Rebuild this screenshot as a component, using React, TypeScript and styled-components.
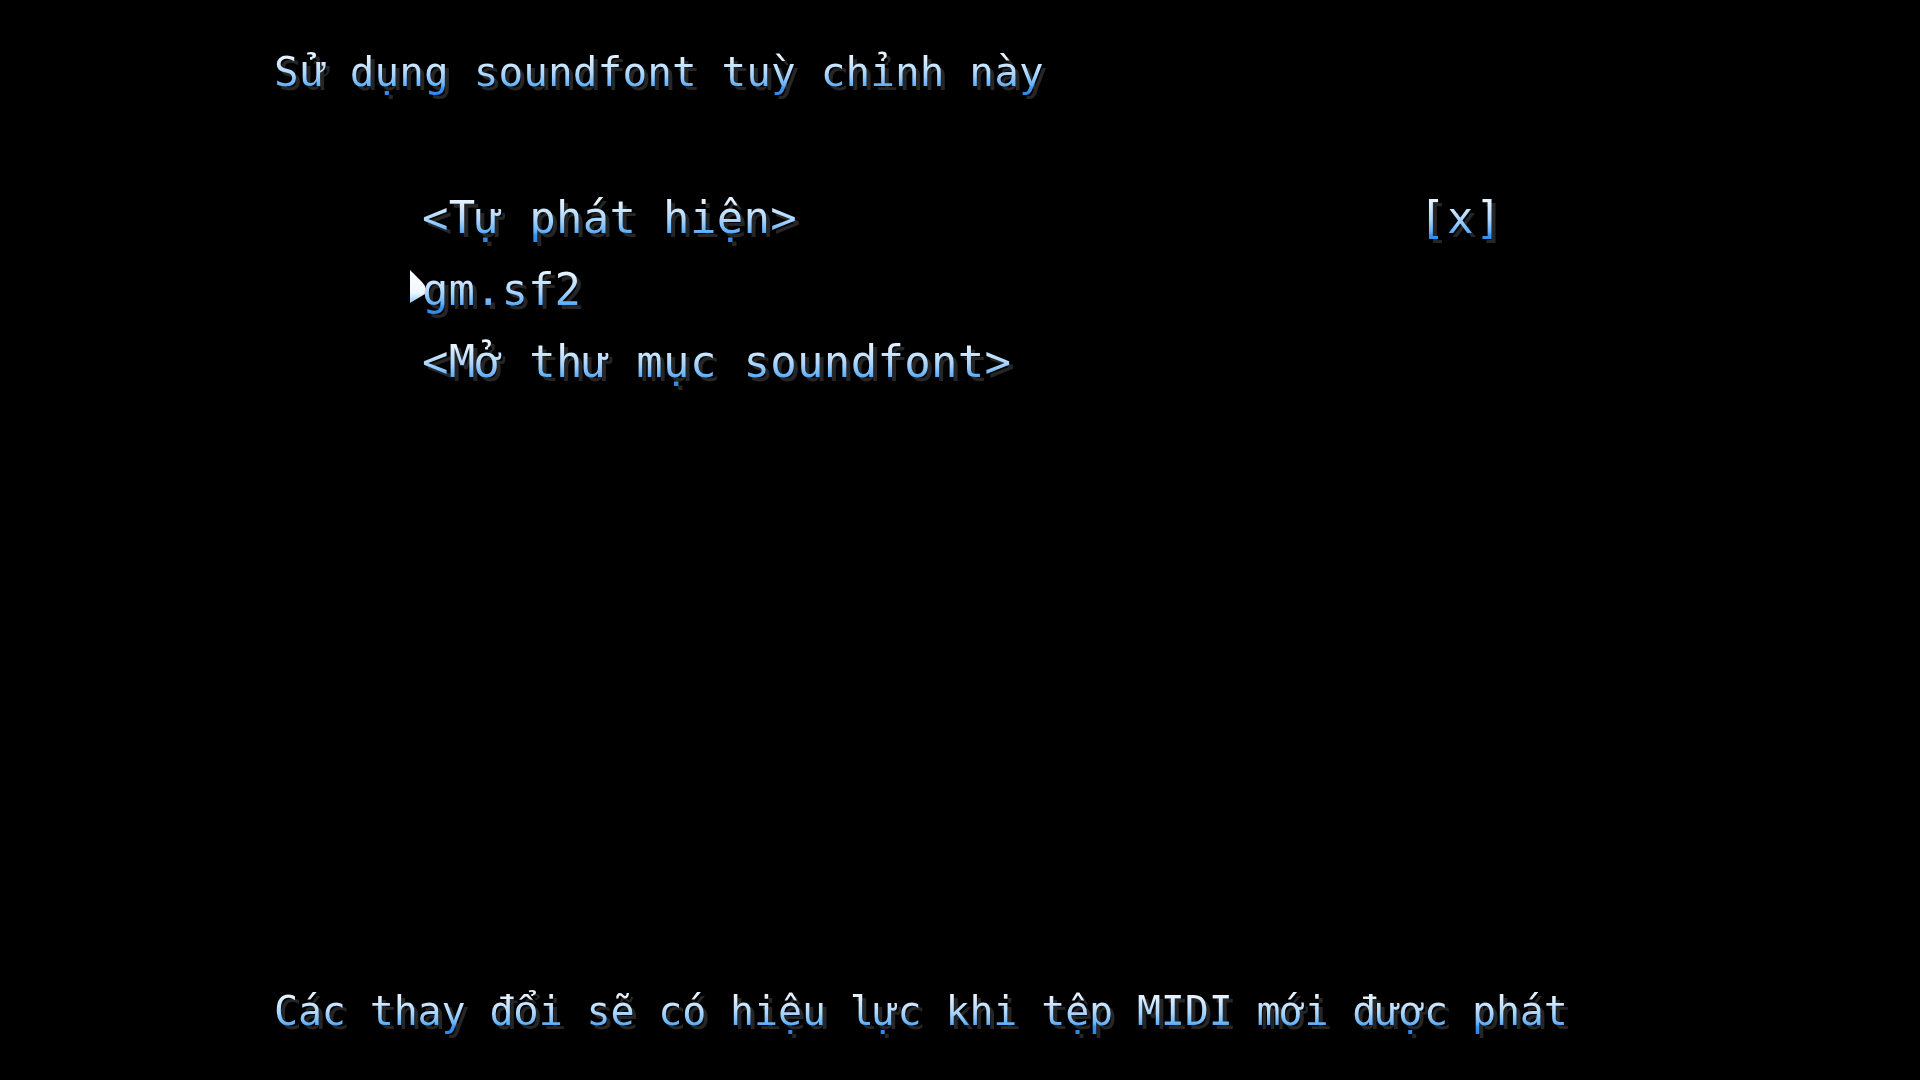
import styled, { createGlobalStyle } from "styled-components";

const Global = createGlobalStyle`
  html, body {
    margin: 0;
    padding: 0;
    background: #000;
  }
`;

const Screen = styled.div`
  box-sizing: border-box;
  width: 100%;
  height: 100vh;
  padding: 48px 0 45px 274px;
  display: flex;
  flex-direction: column;
  background: #000;
  font-family: "DejaVu Sans Mono", "Liberation Mono", monospace;
  font-size: 40px;
  line-height: 48px;
  overflow: hidden;
`;

const Txt = styled.span<{ $size?: number; $spacing?: number }>`
  font-size: ${(p) => p.$size ?? 40}px;
  letter-spacing: ${(p) => p.$spacing ?? 0}px;
  background: linear-gradient(
    180deg,
    #f2f9ff 0%,
    #e2f1ff 20%,
    #a9d5ff 55%,
    #62b0f8 78%,
    #3a95f0 84%,
    #2a86ea 100%
  );
  -webkit-background-clip: text;
  background-clip: text;
  color: transparent;
  -webkit-text-fill-color: transparent;
  filter: drop-shadow(4px 4px 0 #262626);
  white-space: pre;
`;

// DejaVu Sans Mono splits a few stacked Vietnamese marks, so those letters come from Liberation Mono
const Vn = styled.span`
  font-family: "Liberation Mono", "DejaVu Sans Mono", monospace;
  font-size: 1.06em;
  line-height: 0;
`;

const List = styled.div`
  margin-top: 86px;
  padding-left: 148px;
  display: flex;
  flex-direction: column;
  font-size: 44px;
`;

const Row = styled.div`
  position: relative;
  display: grid;
  grid-template-columns: 997px auto;
  line-height: 72px;
`;

const Pointer = styled.svg`
  position: absolute;
  left: -12px;
  top: 16px;
  width: 16px;
  height: 34px;
`;

const Footer = styled.div`
  margin-top: auto;
`;

function Cursor() {
  return (
    <Pointer viewBox="0 0 16 34">
      <defs>
        <linearGradient id="cg" x1="0" y1="0" x2="0" y2="1">
          <stop offset="0" stopColor="#ffffff" />
          <stop offset="0.7" stopColor="#eef7ff" />
          <stop offset="1" stopColor="#8cc6fb" />
        </linearGradient>
      </defs>
      <polygon points="0,0 4,4 8,8 12,12 15,16 15,24 0,33" fill="url(#cg)" />
    </Pointer>
  );
}

export default function App() {
  return (
    <>
      <Global />
      <Screen>
        <div>
          <Txt $size={41} $spacing={0.1}>
            S<Vn>ử</Vn> dụng soundfont tuỳ chỉnh này
          </Txt>
        </div>
        <List>
          <Row>
            <div>
              <Txt $size={44} $spacing={0.3}>&lt;Tự phát hiện&gt;</Txt>
            </div>
            <div>
              <Txt $size={44} $spacing={1.5}>[x]</Txt>
            </div>
          </Row>
          <Row>
            <Cursor />
            <div>
              <Txt $size={44}>gm.sf2</Txt>
            </div>
          </Row>
          <Row>
            <div>
              <Txt $size={44} $spacing={0.3}>&lt;Mở thư mục soundfont&gt;</Txt>
            </div>
          </Row>
        </List>
        <Footer>
          <Txt $spacing={-0.15}>
            Các thay đ<Vn>ổ</Vn>i sẽ có hiệu lực khi tệp MIDI mới được phát
          </Txt>
        </Footer>
      </Screen>
    </>
  );
}
